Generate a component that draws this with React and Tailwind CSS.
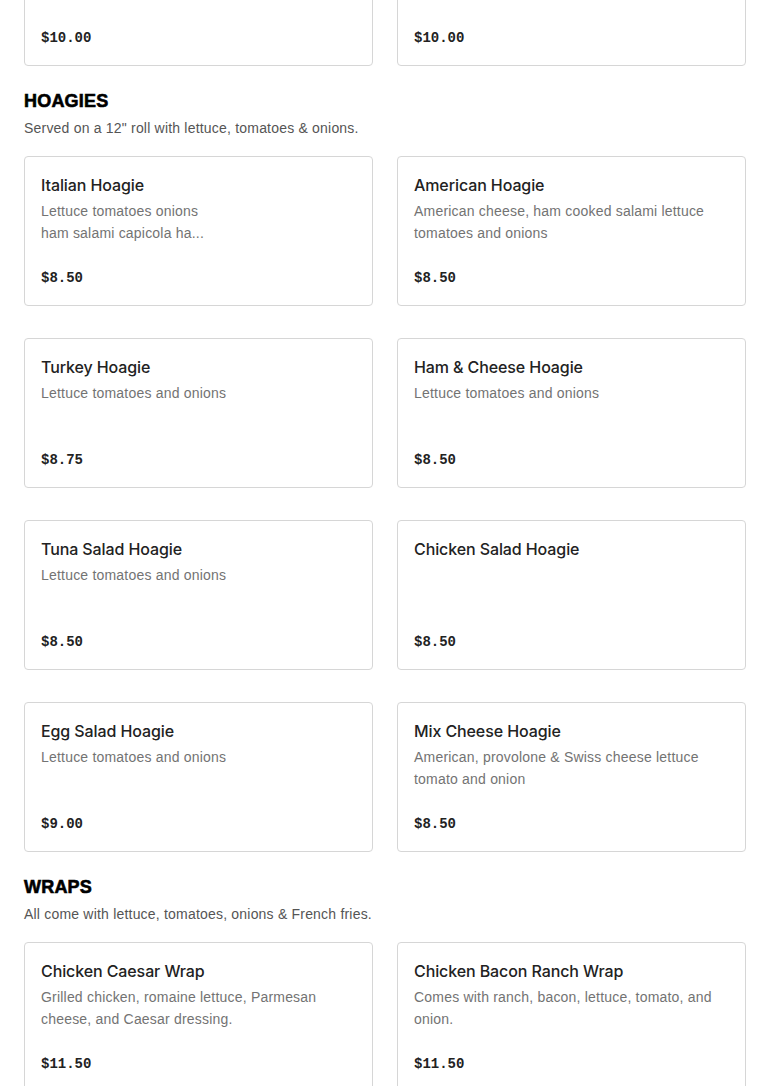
const sections = [
  {
    title: "SANDWICHES",
    note: "",
    items: [
      { name: "", desc: "", price: "$10.00" },
      { name: "", desc: "", price: "$10.00" },
    ],
    hidden: true,
  },
  {
    title: "HOAGIES",
    note: "Served on a 12\" roll with lettuce, tomatoes & onions.",
    items: [
      { name: "Italian Hoagie", desc: ["Lettuce tomatoes onions", "ham salami capicola ha..."], price: "$8.50" },
      { name: "American Hoagie", desc: "American cheese, ham cooked salami lettuce tomatoes and onions", price: "$8.50" },
      { name: "Turkey Hoagie", desc: "Lettuce tomatoes and onions", price: "$8.75" },
      { name: "Ham & Cheese Hoagie", desc: "Lettuce tomatoes and onions", price: "$8.50" },
      { name: "Tuna Salad Hoagie", desc: "Lettuce tomatoes and onions", price: "$8.50" },
      { name: "Chicken Salad Hoagie", desc: "", price: "$8.50" },
      { name: "Egg Salad Hoagie", desc: "Lettuce tomatoes and onions", price: "$9.00" },
      { name: "Mix Cheese Hoagie", desc: "American, provolone & Swiss cheese lettuce tomato and onion", price: "$8.50" },
    ],
  },
  {
    title: "WRAPS",
    note: "All come with lettuce, tomatoes, onions & French fries.",
    items: [
      { name: "Chicken Caesar Wrap", desc: "Grilled chicken, romaine lettuce, Parmesan cheese, and Caesar dressing.", price: "$11.50" },
      { name: "Chicken Bacon Ranch Wrap", desc: "Comes with ranch, bacon, lettuce, tomato, and onion.", price: "$11.50" },
    ],
  },
];

function ItemCard({ item }) {
  return (
    <div className="flex h-[150px] flex-col rounded border border-[#d6d6d6] bg-white px-4 pt-4 pb-4">
      <h3 className="min-h-6 font-['Inter',sans-serif] text-[16px] font-medium leading-6 tracking-[-0.1px] text-[#222]">{item.name}</h3>
      <p className="mt-[3px] pr-2 text-[14px] leading-[22px] tracking-[0.2px] text-[#737373]">
        {Array.isArray(item.desc)
          ? item.desc.map((line, i) => (
              <span key={i} className="block">{line}</span>
            ))
          : item.desc}
      </p>
      <div className="mt-auto font-['Liberation_Mono',monospace] text-[14px] font-bold leading-[22px] text-[#222]">{item.price}</div>
    </div>
  );
}

export default function App() {
  return (
    <div className="min-h-screen bg-white px-6 pb-10 font-['Liberation_Sans',Arial,sans-serif]">
      <div className="-mt-[84px]">
        {sections.map((section) => (
          <section key={section.title} className="mb-[23px]">
            {!section.hidden && (
              <div className="mb-[17px]">
                <h2 className="text-[18px] font-black leading-6 tracking-[0.2px] text-black [-webkit-text-stroke:0.6px_black]">{section.title}</h2>
                <p className="mt-1 text-[14px] leading-[22px] tracking-[0.2px] text-[#555]">{section.note}</p>
              </div>
            )}
            <div className="grid grid-cols-2 gap-x-6 gap-y-8">
              {section.items.map((item, i) => (
                <ItemCard key={i} item={item} />
              ))}
            </div>
          </section>
        ))}
      </div>
    </div>
  );
}
